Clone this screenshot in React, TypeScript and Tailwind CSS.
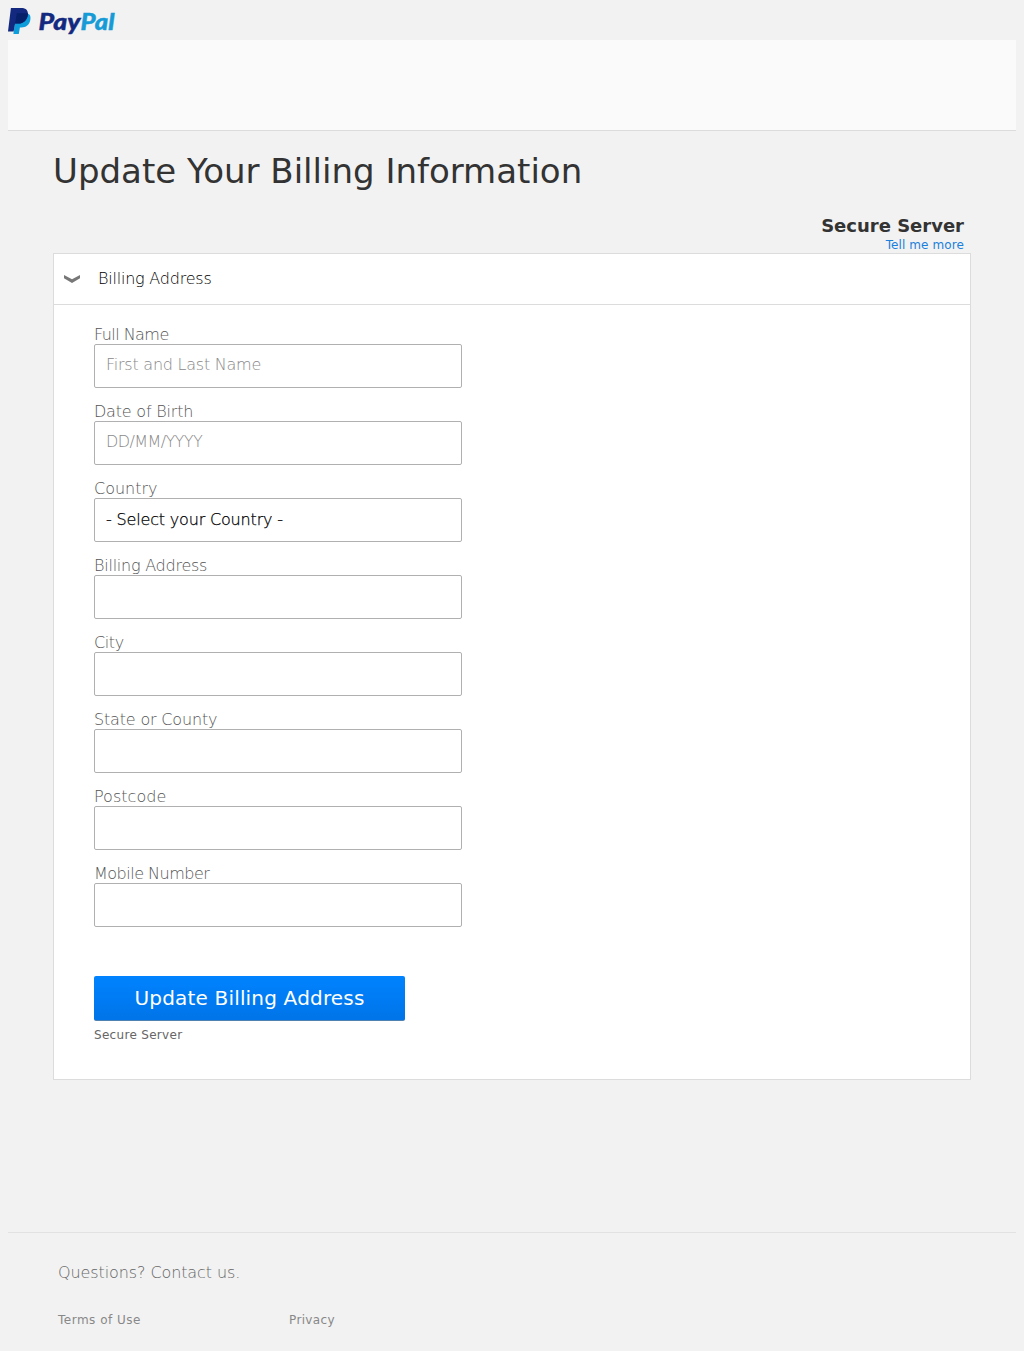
import React from "react";

type FieldProps = { label: string; labelClass: string; placeholder?: string; value?: string; textClass?: string };

function Logo() {
  return (
    <svg width="108" height="28" viewBox="0 0 108 28" role="img" aria-label="PayPal">
      <path d="M8.2 5.2H18.5C21.8 5.5 23 8 22.3 12C21.4 17 18 19.4 13.4 19.4H11.9L10.8 26H5.4Z" fill="#0d9ddb" />
      <path d="M2.9 0H13.3C18 0 20.6 2.5 19.8 7.3C18.9 12.7 15.4 15.6 10 15.6H7.1L5.6 23.4H0Z" fill="#12297f" />
      <path d="M8.8 5.2H19.9C20.1 9.6 16.9 15.6 10 15.6H7.1L8.8 5.2Z" fill="#06206a" />
      <g fontFamily="Lato, sans-serif" fontWeight="900" fontStyle="italic" fontSize="22" strokeWidth="0.4">
        <text x="30.5" y="22" textLength="42" lengthAdjust="spacingAndGlyphs" fill="#12297f" stroke="#12297f">Pay</text>
        <text x="72.5" y="22" textLength="34" lengthAdjust="spacingAndGlyphs" fill="#179bd7" stroke="#179bd7">Pal</text>
      </g>
    </svg>
  );
}

function Field({ label, labelClass, placeholder, value, textClass }: FieldProps) {
  return (
    <div className="mb-[13px] w-[368px]">
      <div className="h-5 pt-px text-[16px] leading-5 font-extralight text-[#555]">
        <span className={labelClass}>{label}</span>
      </div>
      <div className="flex h-11 items-center rounded-[2px] border border-[#b0b0b0] bg-white px-[11px] text-[16px] leading-5 font-extralight">
        {value ? (
          <span className={`text-black ${textClass}`}>{value}</span>
        ) : (
          <span className={`mb-[3px] text-[#888] ${textClass}`}>{placeholder}</span>
        )}
      </div>
    </div>
  );
}

const fields: FieldProps[] = [
  { label: "Full Name", labelClass: "tracking-[-0.55px]", placeholder: "First and Last Name", textClass: "tracking-[-0.24px]" },
  { label: "Date of Birth", labelClass: "tracking-[-0.2px]", placeholder: "DD/MM/YYYY", textClass: "tracking-[-0.6px]" },
  { label: "Country", labelClass: "tracking-normal", value: "- Select your Country -", textClass: "tracking-[-0.17px] [-webkit-text-stroke:0.25px_black]" },
  { label: "Billing Address", labelClass: "tracking-[-0.24px]" },
  { label: "City", labelClass: "tracking-[-0.4px]" },
  { label: "State or County", labelClass: "tracking-[-0.17px]" },
  { label: "Postcode", labelClass: "tracking-[0.03px]" },
  { label: "Mobile Number", labelClass: "tracking-[-0.5px]" },
];

export default function App() {
  return (
    <div className="h-[1351px] w-[1024px] overflow-hidden bg-[#f2f2f2] px-2 pt-2 font-['DejaVu_Sans',sans-serif] whitespace-nowrap">
      <header>
        <div className="h-8">
          <Logo />
        </div>
        <div className="h-[91px] border-b border-[#dcdcdc] bg-[#fafafa]" />
      </header>

      <main className="mr-[45px] ml-[45px] h-[1101px]">
        <h1 className="pt-[17px] text-[34px] leading-[46px] text-[#333]">Update Your Billing Information</h1>
        <div className="mt-[21px] h-[38px] pr-[7px] text-right">
          <div className="text-[18px] leading-[22px] font-bold text-[#333]">Secure Server</div>
          <div className="text-[12px] leading-4 tracking-[0.1px] text-[#1a80dc]">Tell me more</div>
        </div>

        <section className="h-[827px] border border-[#dcdcdc] bg-white">
          <div className="flex h-[51px] items-center border-b border-[#dcdcdc] pl-2.5">
            <svg width="16" height="9" viewBox="0 0 16 9" className="mr-[18px]">
              <path d="M0 0L8 4.3L16 0V3.3L8 8L0 3.3Z" fill="#777" />
            </svg>
            <span className="text-[16px] leading-5 font-extralight tracking-[-0.22px] text-black">Billing Address</span>
          </div>
          <div className="px-10 pt-[19px]">
            {fields.map((field) => (
              <Field key={field.label} {...field} />
            ))}
            <div className="mt-[49px] flex h-[45px] w-[311px] items-center justify-center rounded-[2px] border-b border-[#4f81b2] bg-linear-to-b from-[#0083ff] to-[#0074e8] text-[20px] leading-6 tracking-[0.18px] text-white">
              Update Billing Address
            </div>
            <div className="mt-1.5 text-[12px] leading-4 tracking-[0.31px] text-[#666]">Secure Server</div>
          </div>
        </section>
      </main>

      <footer className="border-t border-[#e2e2e2] pl-[50px]">
        <div className="pt-[30px] text-[16px] leading-5 font-extralight tracking-[-0.1px] text-[#666]">Questions? Contact us.</div>
        <div className="mt-[29px] flex text-[12px] leading-4 text-[#888]">
          <span className="w-[231px] tracking-[0.5px]">Terms of Use</span>
          <span className="tracking-[0.35px]">Privacy</span>
        </div>
      </footer>
    </div>
  );
}
